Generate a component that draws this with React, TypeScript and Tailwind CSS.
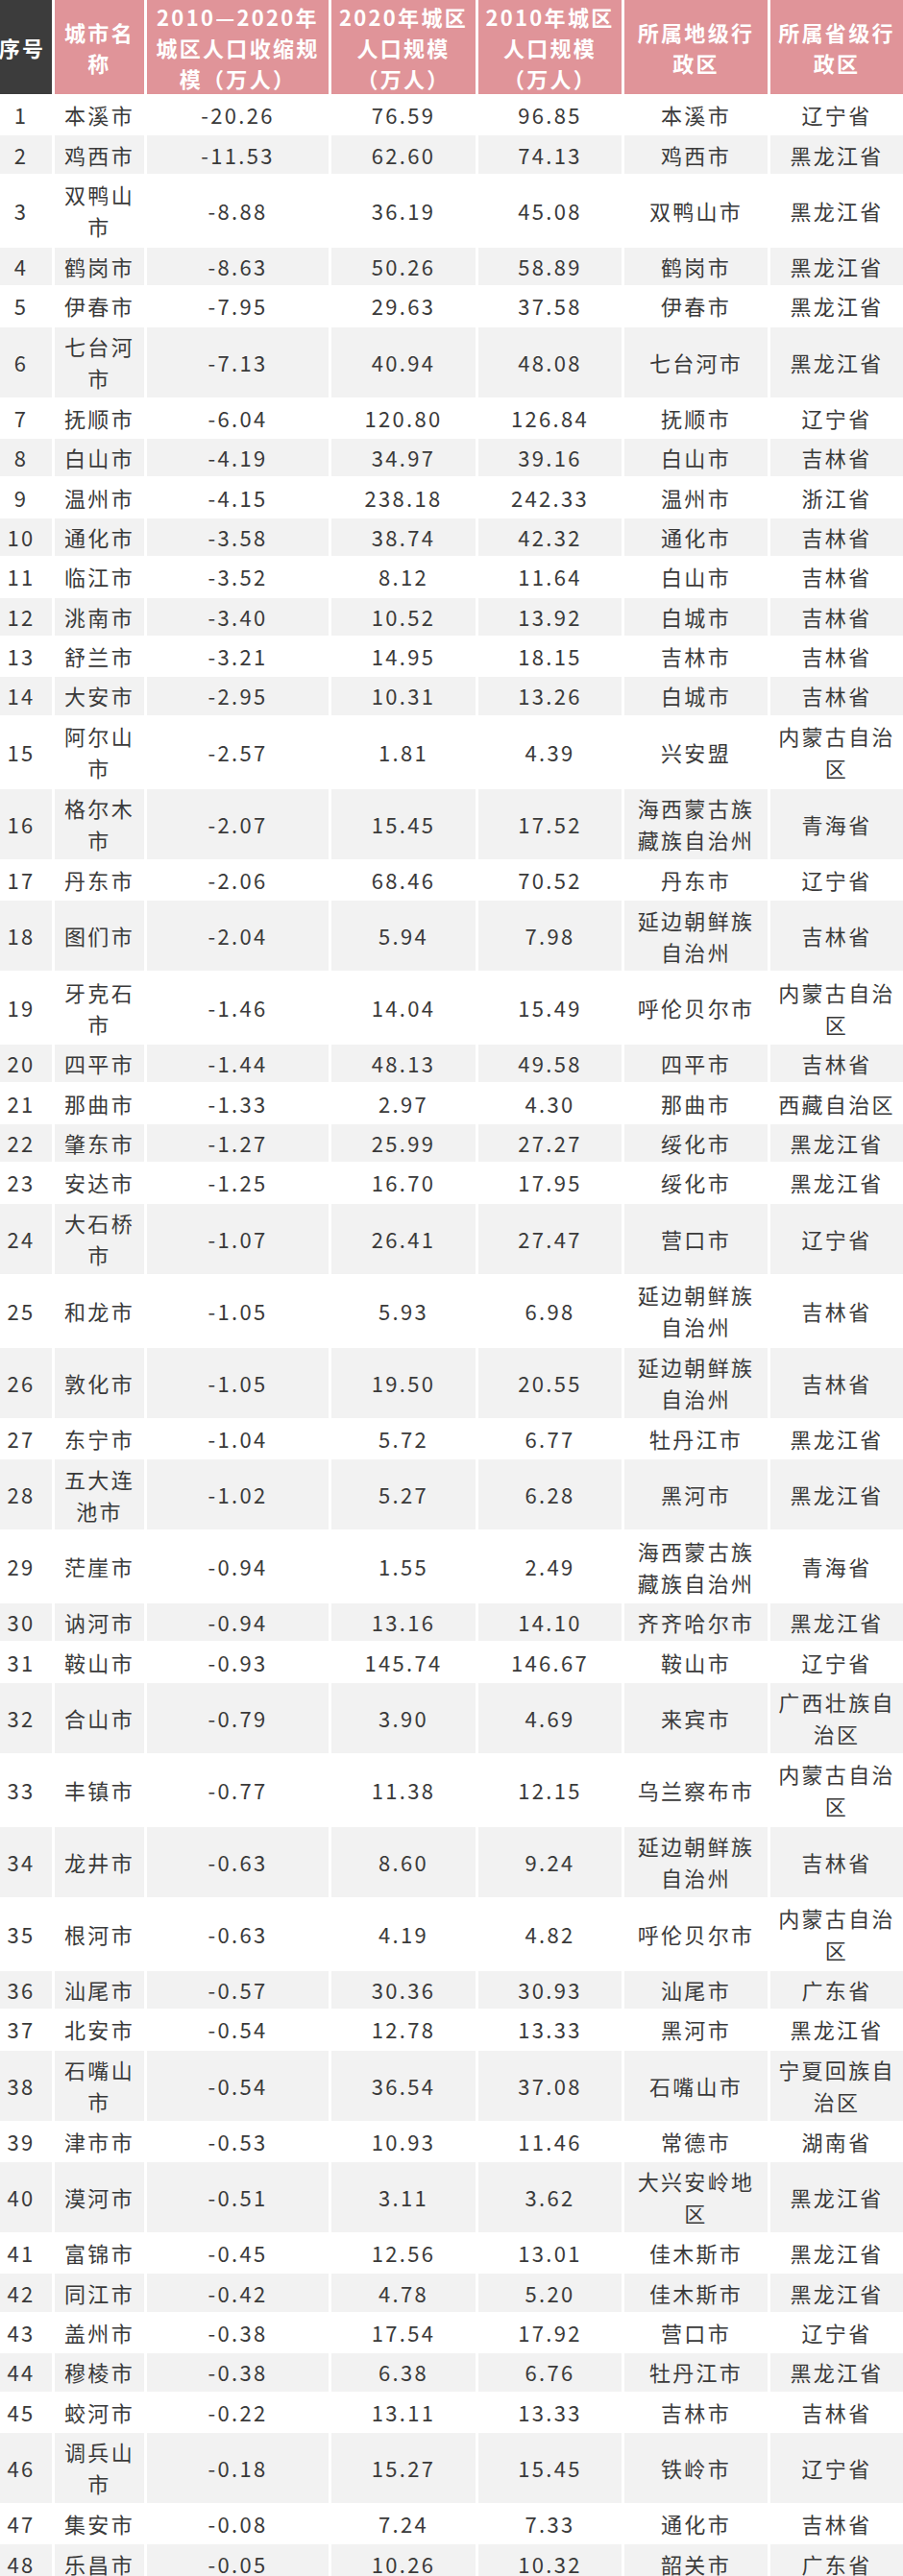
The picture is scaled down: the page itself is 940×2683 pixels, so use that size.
import React from 'react';

type Row = [number, string, string, string, string, string, string];

const rows: Row[] = [
  [1, '本溪市', '-20.26', '76.59', '96.85', '本溪市', '辽宁省'],
  [2, '鸡西市', '-11.53', '62.60', '74.13', '鸡西市', '黑龙江省'],
  [3, '双鸭山市', '-8.88', '36.19', '45.08', '双鸭山市', '黑龙江省'],
  [4, '鹤岗市', '-8.63', '50.26', '58.89', '鹤岗市', '黑龙江省'],
  [5, '伊春市', '-7.95', '29.63', '37.58', '伊春市', '黑龙江省'],
  [6, '七台河市', '-7.13', '40.94', '48.08', '七台河市', '黑龙江省'],
  [7, '抚顺市', '-6.04', '120.80', '126.84', '抚顺市', '辽宁省'],
  [8, '白山市', '-4.19', '34.97', '39.16', '白山市', '吉林省'],
  [9, '温州市', '-4.15', '238.18', '242.33', '温州市', '浙江省'],
  [10, '通化市', '-3.58', '38.74', '42.32', '通化市', '吉林省'],
  [11, '临江市', '-3.52', '8.12', '11.64', '白山市', '吉林省'],
  [12, '洮南市', '-3.40', '10.52', '13.92', '白城市', '吉林省'],
  [13, '舒兰市', '-3.21', '14.95', '18.15', '吉林市', '吉林省'],
  [14, '大安市', '-2.95', '10.31', '13.26', '白城市', '吉林省'],
  [15, '阿尔山市', '-2.57', '1.81', '4.39', '兴安盟', '内蒙古自治区'],
  [16, '格尔木市', '-2.07', '15.45', '17.52', '海西蒙古族藏族自治州', '青海省'],
  [17, '丹东市', '-2.06', '68.46', '70.52', '丹东市', '辽宁省'],
  [18, '图们市', '-2.04', '5.94', '7.98', '延边朝鲜族自治州', '吉林省'],
  [19, '牙克石市', '-1.46', '14.04', '15.49', '呼伦贝尔市', '内蒙古自治区'],
  [20, '四平市', '-1.44', '48.13', '49.58', '四平市', '吉林省'],
  [21, '那曲市', '-1.33', '2.97', '4.30', '那曲市', '西藏自治区'],
  [22, '肇东市', '-1.27', '25.99', '27.27', '绥化市', '黑龙江省'],
  [23, '安达市', '-1.25', '16.70', '17.95', '绥化市', '黑龙江省'],
  [24, '大石桥市', '-1.07', '26.41', '27.47', '营口市', '辽宁省'],
  [25, '和龙市', '-1.05', '5.93', '6.98', '延边朝鲜族自治州', '吉林省'],
  [26, '敦化市', '-1.05', '19.50', '20.55', '延边朝鲜族自治州', '吉林省'],
  [27, '东宁市', '-1.04', '5.72', '6.77', '牡丹江市', '黑龙江省'],
  [28, '五大连池市', '-1.02', '5.27', '6.28', '黑河市', '黑龙江省'],
  [29, '茫崖市', '-0.94', '1.55', '2.49', '海西蒙古族藏族自治州', '青海省'],
  [30, '讷河市', '-0.94', '13.16', '14.10', '齐齐哈尔市', '黑龙江省'],
  [31, '鞍山市', '-0.93', '145.74', '146.67', '鞍山市', '辽宁省'],
  [32, '合山市', '-0.79', '3.90', '4.69', '来宾市', '广西壮族自治区'],
  [33, '丰镇市', '-0.77', '11.38', '12.15', '乌兰察布市', '内蒙古自治区'],
  [34, '龙井市', '-0.63', '8.60', '9.24', '延边朝鲜族自治州', '吉林省'],
  [35, '根河市', '-0.63', '4.19', '4.82', '呼伦贝尔市', '内蒙古自治区'],
  [36, '汕尾市', '-0.57', '30.36', '30.93', '汕尾市', '广东省'],
  [37, '北安市', '-0.54', '12.78', '13.33', '黑河市', '黑龙江省'],
  [38, '石嘴山市', '-0.54', '36.54', '37.08', '石嘴山市', '宁夏回族自治区'],
  [39, '津市市', '-0.53', '10.93', '11.46', '常德市', '湖南省'],
  [40, '漠河市', '-0.51', '3.11', '3.62', '大兴安岭地区', '黑龙江省'],
  [41, '富锦市', '-0.45', '12.56', '13.01', '佳木斯市', '黑龙江省'],
  [42, '同江市', '-0.42', '4.78', '5.20', '佳木斯市', '黑龙江省'],
  [43, '盖州市', '-0.38', '17.54', '17.92', '营口市', '辽宁省'],
  [44, '穆棱市', '-0.38', '6.38', '6.76', '牡丹江市', '黑龙江省'],
  [45, '蛟河市', '-0.22', '13.11', '13.33', '吉林市', '吉林省'],
  [46, '调兵山市', '-0.18', '15.27', '15.45', '铁岭市', '辽宁省'],
  [47, '集安市', '-0.08', '7.24', '7.33', '通化市', '吉林省'],
  [48, '乐昌市', '-0.05', '10.26', '10.32', '韶关市', '广东省'],
];

const headers: string[][] = [
  ['序号'],
  ['城市名', '称'],
  ['2010—2020年', '城区人口收缩规', '模（万人）'],
  ['2020年城区', '人口规模', '（万人）'],
  ['2010年城区', '人口规模', '（万人）'],
  ['所属地级行', '政区'],
  ['所属省级行', '政区'],
];

const gridCols = 'grid grid-cols-[54px_93px_189px_150px_149px_149px_1fr] gap-x-[3px]';

// a row is two lines tall when a name wraps in its column
function isDouble(r: Row) {
  return r[1].length > 3 || r[5].length > 5 || r[6].length > 5;
}

export default function App() {
  return (
    <div className="w-[940px] h-[2683px] overflow-hidden bg-white font-['Noto_Sans_CJK_SC','Noto_Sans',sans-serif] text-[22px] leading-[33px] tracking-[2.3px] text-[#3a3a3a]">
      <div className="flex flex-col gap-y-[2px]">
        {/* Header */}
        <div className={`${gridCols} h-[98px]`}>
          {headers.map((lines, i) => (
            <div
              key={i}
              className={`flex flex-col items-center justify-center overflow-hidden font-semibold leading-[32px] text-white ${
                i === 0 ? 'bg-[#3c3c3c] pl-[2px] pr-[10px]' : 'bg-[#e09499]'
              }`}
            >
              {lines.map((l) => (
                <span key={l} className="whitespace-nowrap">
                  {l}
                </span>
              ))}
            </div>
          ))}
        </div>

        {/* Body rows */}
        {rows.map((r) => {
          const bg = r[0] % 2 === 0 ? 'bg-[#f2f2f2]' : 'bg-white';
          const h = isDouble(r) ? 'h-[73px]' : 'h-[39.4px]';
          return (
            <div key={r[0]} className={`${gridCols} ${h}`}>
              {r.map((cell, ci) => (
                <div
                  key={ci}
                  className={`flex items-center justify-center text-center ${bg} ${
                    ci === 0 ? 'pr-[10px]' : 'px-[6px]'
                  }`}
                >
                  <span>{cell}</span>
                </div>
              ))}
            </div>
          );
        })}
      </div>
    </div>
  );
}
